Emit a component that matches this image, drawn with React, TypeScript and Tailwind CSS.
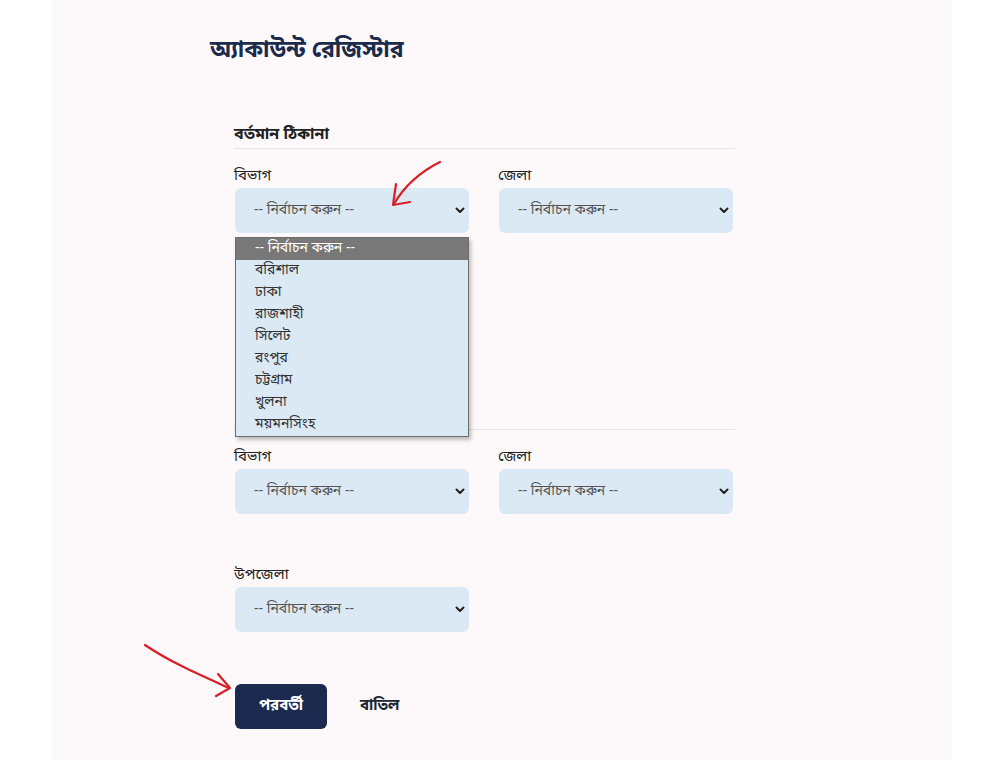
import React from "react";

const BN = {
  fontFamily:
    '"Noto Sans Bengali", "Noto Serif Bengali", "Lohit Bengali", "Vrinda", "FreeSans", "Noto Sans", sans-serif',
};

function Chevron() {
  return (
    <svg width="10" height="7" viewBox="0 0 10 7" className="shrink-0">
      <path d="M1.5 1.5 L5 5 L8.5 1.5" fill="none" stroke="#222" strokeWidth="2" strokeLinecap="round" strokeLinejoin="round" />
    </svg>
  );
}

function Select() {
  return (
    <div className="h-[45px] w-[234px] rounded-[6px] bg-[#dbe9f5] flex items-center justify-between pl-[19px] pr-[4px] text-[14px] text-[#555]">
      <span>-- নির্বাচন করুন --</span>
      <Chevron />
    </div>
  );
}

function Field({ label, hidden }: { label: string; hidden?: boolean }) {
  return (
    <div className={"flex flex-col " + (hidden ? "invisible" : "")}>
      <div className="text-[15px] leading-[20px] text-[#222] h-[20px] mb-[2px] ml-[-1px]">{label}</div>
      <Select />
    </div>
  );
}

function Section({ title, open, hideTitle }: { title: string; open?: boolean; hideTitle?: boolean }) {
  const items = ["বরিশাল", "ঢাকা", "রাজশাহী", "সিলেট", "রংপুর", "চট্টগ্রাম", "খুলনা", "ময়মনসিংহ"];
  return (
    <div className="flex flex-col">
      <div className="pb-[2px] border-b border-[#e3e3e3] ml-[-1px]">
        <div className={"text-[16px] leading-[22px] font-bold text-[#222] " + (hideTitle ? "invisible" : "")}>{title}</div>
      </div>
      <div className="relative grid grid-cols-[234px_234px] gap-x-[30px] mt-[17px]">
        <Field label="বিভাগ" />
        <Field label="জেলা" />
        {open && (
          <div className="absolute left-0 top-[71px] w-[234px] z-10 border border-[#6d6d6d] bg-[#dbe9f5] shadow-[2px_3px_4px_rgba(0,0,0,0.25)] text-[14px] leading-[22px] text-[#333]">
            <div className="bg-[#787878] text-white pl-[19px] h-[22px]">-- নির্বাচন করুন --</div>
            {items.map((it) => (
              <div key={it} className="pl-[19px] h-[22px]">
                {it}
              </div>
            ))}
          </div>
        )}
      </div>
      <div className="mt-[51px]">
        <Field label="উপজেলা" hidden={open} />
      </div>
    </div>
  );
}

export default function App() {
  return (
    <div className="relative min-h-[760px] w-[1000px] bg-white" style={BN}>
      <div className="ml-[52px] w-[900px] min-h-[760px] bg-[#fdf9fa] border-x-[12px] border-[#fbfafa] box-border">
        <div className="pl-[146px] pt-[34px]">
          <h1 className="text-[23px] leading-[34px] font-bold text-[#1c2b4b]">অ্যাকাউন্ট রেজিস্টার</h1>
        </div>
        <div className="pl-[171px] pr-[205px] pt-[56px]">
          <Section title="বর্তমান ঠিকানা" open />
          <div className="mt-[54px]">
            <Section title="স্থায়ী ঠিকানা" hideTitle />
          </div>
          <div className="mt-[52px] flex items-center gap-[33px]">
            <button className="h-[45px] w-[92px] rounded-[6px] bg-[#1b2a4e] text-white font-bold text-[15px]">
              পরবর্তী
            </button>
            <button className="text-[#1c2433] font-bold text-[15px]">বাতিল</button>
          </div>
        </div>
      </div>
      <svg className="absolute left-0 top-0 pointer-events-none" width="1000" height="760">
        <path d="M440 162 C 420 172, 405 185, 394 204" fill="none" stroke="#d81f26" strokeWidth="2.2" strokeLinecap="round" />
        <path d="M396 184 L393 205 L410 202" fill="none" stroke="#d81f26" strokeWidth="2.2" strokeLinecap="round" strokeLinejoin="round" />
        <path d="M145 645 C 170 662, 200 675, 229 688" fill="none" stroke="#d81f26" strokeWidth="2.2" strokeLinecap="round" />
        <path d="M218 674 L230 688 L216 696" fill="none" stroke="#d81f26" strokeWidth="2.2" strokeLinecap="round" strokeLinejoin="round" />
      </svg>
    </div>
  );
}
